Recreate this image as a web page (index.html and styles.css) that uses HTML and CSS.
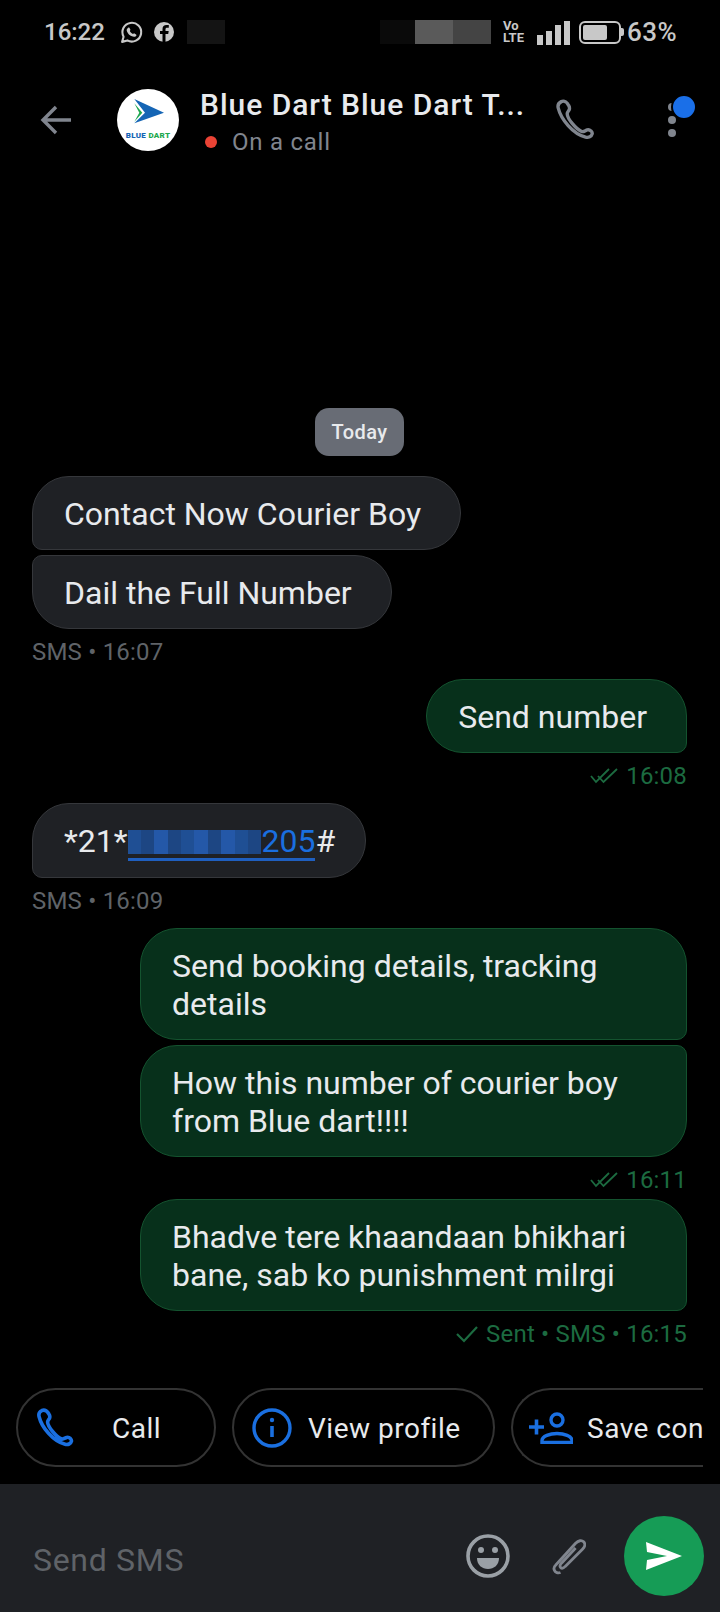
FILE: index.html
```html
<!DOCTYPE html>
<html lang="en">
<head>
    <meta charset="UTF-8">
    <meta name="viewport" content="width=device-width, initial-scale=1.0">
    <title>Blue Dart</title>
    <link rel="stylesheet" href="styles.css">
</head>
<body>
    <div class="status-bar">
        <span class="clock">16:22</span>
        <svg class="st-wa" viewBox="0 0 24 24"><path d="M3 21l1.4-5A9 9 0 1 1 8 19.6z" fill="none" stroke="#c8c8c8" stroke-width="2" stroke-linejoin="round"/><path d="M8.6 7.6c.5-.5 1.2-.5 1.5 0l.8 1.6c.2.4 0 .7-.5 1.3.6 1.400 1.700 2.400 3.100 3 .6-.6.9-.8 1.300-.6l1.600.9c.4.3.4 1 0 1.500-1 1-2.400 1.100-4 .4-2.200-.9-3.900-2.600-4.700-4.700-.6-1.500-.4-2.600.9-3.400z" fill="#c8c8c8"/></svg>
        <svg class="st-fb" viewBox="0 0 24 24"><circle cx="12" cy="12" r="10" fill="#c8c8c8"/><path d="M13.500 22v-8h2.700l.5-3h-3.200V9.200c0-.9.400-1.500 1.600-1.500h1.700V5.100c-.6-.1-1.400-.2-2.300-.2-2.500 0-4 1.500-4 4.100V11H8v3h2.500v8z" fill="#000"/></svg>
        <span class="blot blot-a"></span>
        <span class="status-gap"></span>
        <span class="blot blot-b"></span>
        <span class="blot blot-c"></span>
        <span class="blot blot-d"></span>
        <span class="volte"><span>Vo</span><span>LTE</span></span>
        <span class="signal"><i class="s1"></i><i class="s2"></i><i class="s3"></i><i class="s4"></i></span>
        <span class="battery"><span class="battery-fill"></span></span>
        <span class="battery-cap"></span>
        <span class="percent">63%</span>
    </div>

    <div class="header">
        <svg class="back" viewBox="0 0 32 30"><path d="M31 15H3M16 2L3 15l13 13" fill="none" stroke="#80858e" stroke-width="3.400"/></svg>
        <div class="avatar">
            <svg viewBox="0 0 62 62">
                <path d="M17.300 14.300l8 9.400-8 9 5-9z" fill="#1fa84f"/>
                <path d="M17.300 10L47 23.700 17.300 34.300l10.700-10.600z" fill="#1565b5"/>
                <text class="logo-text" x="31" y="49" text-anchor="middle"><tspan fill="#1565b5">BLUE</tspan> <tspan fill="#1fa84f">DART</tspan></text>
            </svg>
        </div>
        <div class="header-text">
            <div class="title">Blue Dart Blue Dart T...</div>
            <div class="subtitle"><span class="red-dot"></span>On a call</div>
        </div>
        <svg class="phone-top" viewBox="0 0 40 40"><path d="M6 2.500c-2.500 1.200-3.600 3.500-2.900 6.200 2.600 10.600 13.900 24.500 26 27.600 2.900.7 5.700-.5 6.300-3 .3-1.200-.2-2-1.100-2.900-.9-.8-2.500-1.300-3.600-1-1.700.5-3.500 2.300-5.300 1.600C20.100 28.600 11.800 19 11.600 14c0-1.500 1.300-2.500 1.900-3.600.5-1.200.3-2.900-.5-4.300C11.700 3.500 9 1.200 6 2.500z" fill="none" stroke="#80858e" stroke-width="3.200"/></svg>
        <div class="more">
            <i></i><i></i><i></i>
            <span class="more-badge"></span>
        </div>
    </div>

    <div class="messages">
        <div class="today">Today</div>

        <div class="bubble in first">Contact Now Courier Boy</div>
        <div class="bubble in last">Dail the Full Number</div>
        <div class="meta in-meta">SMS • 16:07</div>

        <div class="bubble out first">Send number</div>
        <div class="meta out-meta">
            <svg class="ticks" viewBox="0 0 28 18"><path d="M1 9l5 6L19 2M8 9l5.500 6L27 2" fill="none" stroke="#1c6b40" stroke-width="1.800"/></svg>
            16:08
        </div>

        <div class="bubble in first number">*21*<span class="link"><i class="b1"></i><i class="b2"></i><i class="b3"></i><i class="b2"></i><i class="b1"></i><i class="b3"></i><i class="b2"></i><i class="b3"></i><i class="b1"></i><i class="b2"></i>205</span>#</div>
        <div class="meta in-meta">SMS • 16:09</div>

        <div class="bubble out wide first">Send booking details, tracking details</div>
        <div class="bubble out wide last">How this number of courier boy from Blue dart!!!!</div>
        <div class="meta out-meta">
            <svg class="ticks" viewBox="0 0 28 18"><path d="M1 9l5 6L19 2M8 9l5.500 6L27 2" fill="none" stroke="#1c6b40" stroke-width="1.800"/></svg>
            16:11
        </div>

        <div class="bubble out wide first close">Bhadve tere khaandaan bhikhari bane, sab ko punishment milrgi</div>
        <div class="meta out-meta">
            <svg class="tick" viewBox="0 0 22 18"><path d="M1 9l7 7L21 2" fill="none" stroke="#1c6b40" stroke-width="2.200"/></svg>
            Sent • SMS • 16:15
        </div>
    </div>

    <div class="chips">
        <div class="chip chip-call">
            <svg class="chip-icon" viewBox="0 0 40 40"><path d="M6 2.500c-2.500 1.200-3.600 3.500-2.900 6.200 2.600 10.600 13.900 24.500 26 27.600 2.900.7 5.700-.5 6.300-3 .3-1.200-.2-2-1.100-2.900-.9-.8-2.500-1.300-3.600-1-1.700.5-3.500 2.300-5.300 1.600C20.100 28.600 11.800 19 11.600 14c0-1.500 1.300-2.500 1.900-3.600.5-1.200.3-2.900-.5-4.300C11.700 3.500 9 1.200 6 2.500z" fill="none" stroke="#1a6fe0" stroke-width="3.600"/></svg>
            Call
        </div>
        <div class="chip chip-profile">
            <svg class="chip-icon" viewBox="0 0 40 40"><circle cx="20" cy="20" r="18" fill="none" stroke="#1a6fe0" stroke-width="3.400"/><path d="M20 18v11" stroke="#1a6fe0" stroke-width="3.600"/><circle cx="20" cy="12" r="2.200" fill="#1a6fe0"/></svg>
            View profile
        </div>
        <div class="chip chip-save">
            <svg class="chip-icon-wide" viewBox="0 0 44 32"><path d="M0 15h15M7.500 7.500v15" stroke="#1a6fe0" stroke-width="3.600"/><circle cx="28" cy="8" r="6" fill="none" stroke="#1a6fe0" stroke-width="3.400"/><path d="M13 30.500v-2c0-4.500 8-7 15-7s15 2.500 15 7v2z" fill="none" stroke="#1a6fe0" stroke-width="3.400"/></svg>
            Save con
        </div>
    </div>

    <div class="composer">
        <div class="placeholder">Send SMS</div>
        <svg class="emoji" viewBox="0 0 44 44"><circle cx="22" cy="22" r="20" fill="none" stroke="#9aa0a6" stroke-width="3.600"/><circle cx="15" cy="16" r="3" fill="#9aa0a6"/><circle cx="29" cy="16" r="3" fill="#9aa0a6"/><path d="M11 24h22c0 7-5 11-11 11s-11-4-11-11z" fill="#9aa0a6"/></svg>
        <svg class="clip" viewBox="0 0 36 40"><path d="M9 37.500c-2.500 1-5.500 0-6.500-2.500-1-2 0-4 1.500-5.500L25 6.500c3-3 6.500-3.500 8.500-1.500s1.500 5-1 7.500L14 31c-1.700 1.800-3.700 2.300-4.800 1.300-1.200-1.200-.7-3 .8-4.700l15-16" fill="none" stroke="#80858e" stroke-width="3" stroke-linejoin="round"/></svg>
        <div class="send">
            <svg viewBox="0 0 36 30"><path d="M0 1l36 14L0 29l1-10 20-4L1 11z" fill="#fff"/></svg>
        </div>
    </div>
</body>
</html>
```

FILE: styles.css
```css
* {
    box-sizing: border-box;
}
html, body {
    margin: 0;
    height: 1612px;
}
body {
    width: 720px;
    display: flex;
    flex-direction: column;
    overflow: hidden;
    background-color: #000;
    font-family: Roboto, "Noto Sans", sans-serif;
    color: #e8eaed;
}

/* status bar */
.status-bar {
    height: 64px;
    flex: none;
    display: flex;
    align-items: center;
    padding-left: 44px;
    color: #c8c8c8;
}
.clock {
    font-size: 24px;
    font-weight: 500;
    width: 75px;
}
.st-wa {
    width: 25px;
    height: 25px;
    margin-right: 8px;
}
.st-fb {
    width: 24px;
    height: 24px;
    margin-right: 11px;
}
.blot {
    width: 38px;
    height: 24px;
}
.blot-a {
    background-color: #141414;
}
.status-gap {
    width: 155px;
}
.blot-b {
    background-color: #0a0a0a;
    width: 35px;
}
.blot-c {
    background-color: #5a5a5a;
}
.blot-d {
    background-color: #444;
}
.volte {
    display: flex;
    flex-direction: column;
    margin-left: 12px;
    font-size: 13px;
    font-weight: 700;
    line-height: 12px;
    width: 22px;
}
.signal {
    display: flex;
    align-items: flex-end;
    gap: 3px;
    height: 25px;
    margin-left: 12px;
}
.signal i {
    width: 6px;
    background-color: #c8c8c8;
}
.s1 { height: 10px; }
.s2 { height: 14px; }
.s3 { height: 20px; }
.s4 { height: 24px; }
.battery {
    width: 42px;
    height: 23px;
    margin-left: 9px;
    border: 2px solid #c8c8c8;
    border-radius: 6px;
    padding: 2px;
}
.battery-fill {
    display: block;
    width: 24px;
    height: 100%;
    background-color: #c8c8c8;
    border-radius: 2px;
}
.battery-cap {
    width: 3px;
    height: 8px;
    background-color: #c8c8c8;
    border-radius: 0 2px 2px 0;
}
.percent {
    font-size: 26px;
    font-weight: 500;
    letter-spacing: .5px;
    margin-left: 3px;
}

/* header */
.header {
    height: 112px;
    flex: none;
    display: flex;
    align-items: center;
    position: relative;
    padding-left: 40px;
}
.back {
    width: 32px;
    height: 30px;
}
.avatar {
    width: 62px;
    height: 62px;
    margin-left: 45px;
    border-radius: 50%;
    background-color: #fff;
    flex: none;
}
.avatar svg {
    display: block;
}
.logo-text {
    font-size: 8px;
    font-weight: 900;
    letter-spacing: .3px;
}
.header-text {
    margin-left: 21px;
    width: 355px;
    padding-top: 5px;
}
.title {
    font-size: 30px;
    font-weight: 500;
    line-height: 36px;
    letter-spacing: .97px;
    white-space: nowrap;
}
.subtitle {
    display: flex;
    align-items: center;
    font-size: 24px;
    line-height: 32px;
    letter-spacing: .75px;
    color: #80858e;
    margin-top: 3px;
}
.red-dot {
    width: 12px;
    height: 12px;
    margin: 0 15px 0 5px;
    border-radius: 50%;
    background-color: #ea4335;
}
.phone-top {
    width: 42px;
    height: 42px;
    margin-left: 0;
}
.more {
    display: flex;
    flex-direction: column;
    gap: 5px;
    position: absolute;
    left: 668px;
    top: 39px;
}
.more i {
    width: 8px;
    height: 8px;
    border-radius: 50%;
    background-color: #80858e;
}
.more-badge {
    position: absolute;
    left: 3px;
    top: -9px;
    width: 26px;
    height: 26px;
    border: 2px solid #000;
    border-radius: 50%;
    background-color: #1a6fe8;
}

/* messages */
.messages {
    flex: 1;
    display: flex;
    flex-direction: column;
    justify-content: flex-end;
    padding: 0 33px 37px 32px;
}
.today {
    align-self: center;
    height: 48px;
    padding: 0 17px;
    margin: 0 0 20px 0;
    border-radius: 14px;
    background-color: #686c75;
    font-size: 20px;
    font-weight: 500;
    line-height: 48px;
    letter-spacing: .4px;
}
.bubble {
    max-width: 547px;
    border: 1px solid;
    border-radius: 37px;
    padding: 18px 39px 16px 31px;
    font-size: 32px;
    line-height: 38px;
}
.bubble.in {
    align-self: flex-start;
    background-color: #1f2125;
    border-color: #35373b;
    border-bottom-left-radius: 10px;
}
.bubble.in.last {
    border-top-left-radius: 10px;
    border-bottom-left-radius: 37px;
    margin-top: 5px;
}
.bubble.number {
    padding-right: 30px;
}
.bubble.out {
    align-self: flex-end;
    background-color: #07301b;
    border-color: #14532f;
    border-bottom-right-radius: 10px;
}
.bubble.out.last {
    border-top-right-radius: 10px;
    border-bottom-right-radius: 37px;
    margin-top: 5px;
}
.bubble.wide {
    width: 547px;
}
.bubble.close {
    margin-top: -8px;
}
.meta {
    display: flex;
    align-items: center;
    gap: 8px;
    height: 34px;
    margin: 6px 0 10px;
    font-size: 24px;
    letter-spacing: .2px;
}
.in-meta {
    color: #5f6368;
}
.out-meta {
    justify-content: flex-end;
    color: #1c6b40;
}
.meta:last-child {
    margin-bottom: 0;
}
.ticks {
    width: 28px;
    height: 18px;
}
.tick {
    width: 22px;
    height: 18px;
}
.link {
    color: #1a6fe0;
    border-bottom: 3px solid #1f5fbf;
    display: inline-block;
    line-height: 33px;
}
.link i {
    display: inline-block;
    width: 13.400px;
    height: 24px;
    vertical-align: -2px;
}
.b1 { background-color: #1f4f94; }
.b2 { background-color: #1d4683; }
.b3 { background-color: #2458a8; }

/* chips */
.chips {
    height: 96px;
    flex: none;
    display: flex;
    gap: 16px;
    padding: 0 16px 17px;
    overflow: hidden;
    font-size: 28px;
    letter-spacing: .5px;
}
.chip {
    height: 79px;
    flex: none;
    display: flex;
    align-items: center;
    padding-top: 1px;
    border: 2px solid #333;
    border-radius: 40px;
    white-space: nowrap;
}
.chip-call {
    width: 200px;
    padding-left: 18px;
    gap: 36px;
}
.chip-profile {
    width: 263px;
    padding-left: 18px;
    gap: 16px;
}
.chip-save {
    width: 192px;
    padding-left: 16px;
    gap: 14px;
    border-right: none;
    border-radius: 40px 0 0 40px;
}
.chip-icon {
    width: 40px;
    height: 40px;
    flex: none;
}
.chip-icon-wide {
    width: 44px;
    height: 32px;
    flex: none;
}

/* composer */
.composer {
    height: 128px;
    flex: none;
    display: flex;
    align-items: center;
    padding: 16px 16px 0 33px;
    background-color: #1f2125;
}
.placeholder {
    flex: 1;
    margin-top: 8px;
    font-size: 32px;
    letter-spacing: .7px;
    color: #5f6368;
}
.emoji {
    width: 44px;
    height: 44px;
    margin-right: 42px;
}
.clip {
    width: 34px;
    height: 38px;
    margin-right: 38px;
}
.send {
    width: 80px;
    height: 80px;
    border-radius: 50%;
    background-color: #169c56;
    display: flex;
    align-items: center;
    justify-content: center;
}
.send svg {
    width: 36px;
    height: 30px;
}
```
